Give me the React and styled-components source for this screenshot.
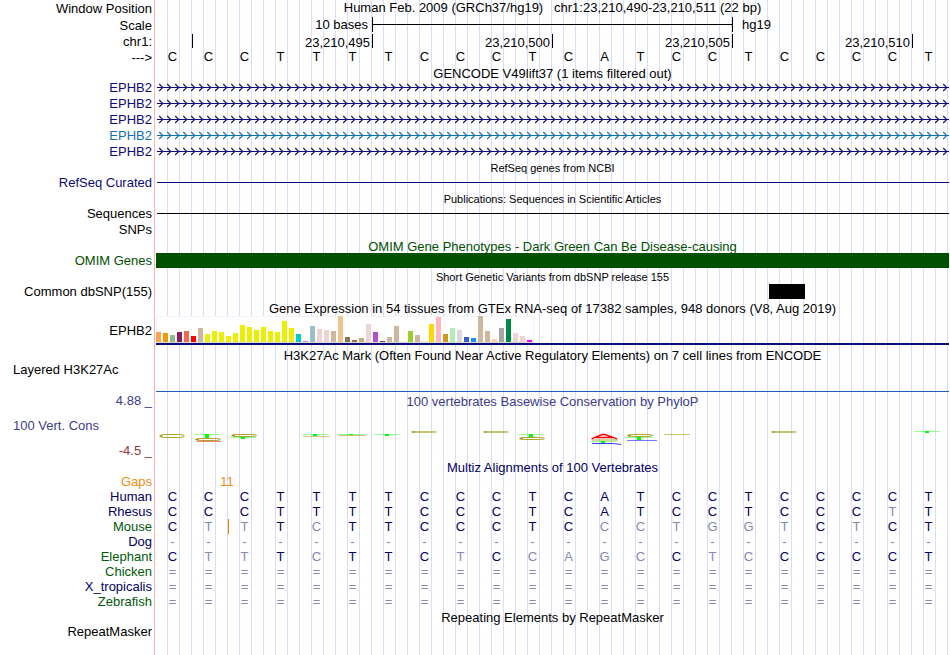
import React from "react";
import styled, { createGlobalStyle } from "styled-components";

const navy = "#0c0c78";

const bases = "CCCTTTTCCCTCATCCTCCCCT";

const positions = [
  { start: 1, end: 2, text: "" },
  { start: 2, end: 7, text: "23,210,495" },
  { start: 7, end: 12, text: "23,210,500" },
  { start: 12, end: 17, text: "23,210,505" },
  { start: 17, end: 22, text: "23,210,510" },
];

const transcripts = [navy, navy, navy, "#1470b0", navy];

// [height, colour] for each tissue
const tissues = [
  [10, "#ffa54f"], [9, "#ee9a00"], [7, "#8fbc8f"], [10, "#8b1c62"],
  [11, "#ee6a50"], [6, "#ff0000"], [14, "#cdb79e"], [8, "#eeee00"],
  [11, "#eeee00"], [10, "#eeee00"], [6, "#eeee00"], [9, "#eeee00"],
  [17, "#eeee00"], [15, "#eeee00"], [12, "#eeee00"], [15, "#eeee00"],
  [11, "#eeee00"], [10, "#eeee00"], [21, "#eeee00"], [14, "#eeee00"],
  [8, "#00cdcd"], [1, "#ee82ee"], [16, "#9ac0cd"], [13, "#eed5d2"],
  [12, "#eed5d2"], [11, "#cdb79e"], [26, "#eec591"], [5, "#8b7355"],
  [2, "#8b7355"], [4, "#cdaa7d"], [18, "#eed5d2"], [10, "#b452cd"],
  [1, "#7a378b"], [5, "#cdb79e"], [16, "#cdb79e"], [0, "#cdb79e"],
  [11, "#9acd32"], [7, "#cdb79e"], [0, "#7a67ee"], [18, "#ffd700"],
  [25, "#ffb6c1"], [8, "#cd9b1d"], [14, "#b4eeb4"], [12, "#d9d9d9"],
  [5, "#3a5fcd"], [4, "#1e90ff"], [26, "#cdb79e"], [11, "#cdb79e"],
  [3, "#ffd39b"], [14, "#a6a6a6"], [23, "#008b45"], [9, "#eed5d2"],
  [6, "#eed5d2"], [2, "#ff00ff"],
];

// lower case marks a base that differs from human
const species = [
  { name: "Human", color: "#000064", row: bases },
  { name: "Rhesus", color: "#000064", row: "CCCTTTTCCCTCATCCTCCCtT" },
  { name: "Mouse", color: "#005a0a", row: "CttTcTTCCCTCcctggtCtCT", insert: 2 },
  { name: "Dog", color: "#000064", row: "-".repeat(22) },
  { name: "Elephant", color: "#005a0a", row: "CttTcTTCtCcagcCtcCCCCT" },
  { name: "Chicken", color: "#005a0a", row: "=".repeat(22) },
  { name: "X_tropicalis", color: "#000064", row: "=".repeat(22) },
  { name: "Zebrafish", color: "#005a0a", row: "=".repeat(22) },
];

const Intron = ({ color, id }) => (
  <Strand aria-hidden="true">
    <defs>
      <pattern id={id} width="8" height="16" patternUnits="userSpaceOnUse">
        <path d="M3.2 4 L6.7 7.5 L3.2 11" fill="none" stroke={color} strokeWidth="1.1" />
      </pattern>
    </defs>
    <rect x="0" y="0" width="100%" height="16" fill={`url(#${id})`} />
    <rect x="1" y="7" width="100%" height="1" fill={color} />
  </Strand>
);

const Oval = ({ x, y, h = 3 }) => (
  <g fill="none" stroke="#a09c10">
    <rect
      x={x + 0.5}
      y={y + 0.5}
      width="25"
      height={h - 1}
      rx="6"
      ry={(h - 1) / 2}
      strokeWidth={h > 2 ? 0.9 : 0.6}
    />
    <path d={`M${x + 1} ${y + h / 2} h3`} strokeWidth="1.2" />
  </g>
);

const Stem = ({ x, y, h }) => (
  <g fill="#00ff00">
    <rect x={x} y={y} width="26" height="1" opacity="0.4" />
    <rect x={x + 11} y={y} width="4" height={h} />
  </g>
);

// one unit is one pixel, 36 units to a base
const Conservation = () => (
  <Plot viewBox="0 0 793 50" aria-label="PhyloP scores">
    <Oval x={3} y={25} h={4} />
    <Stem x={38} y={25} h={4} />
    <Oval x={39} y={29} />
    <rect x="41" y="32" width="24" height="1" fill="#ff0000" opacity="0.5" />
    <Oval x={75} y={25} />
    <Stem x={74} y={28} h={2} />
    <Stem x={146} y={25} h={2} />
    <rect x="147" y="27" width="27" height="1" fill="#a09c10" opacity="0.5" />
    <Stem x={182} y={25} h={1} />
    <rect x="183" y="26" width="27" height="1" fill="#a09c10" opacity="0.6" />
    <Stem x={218} y={25} h={2} />
    <Oval x={255} y={22} h={2} />
    <Oval x={327} y={22} h={2} />
    <Stem x={362} y={25} h={3} />
    <Oval x={363} y={28} />
    <rect x="436" y="30" width="26" height="2" fill="#a09c10" opacity="0.4" />
    <path
      d="M435.5 29.8 L446 25.5 H449 L461 29.8 M440 28.5 H457"
      fill="none"
      stroke="#ff0000"
      strokeWidth="1.4"
    />
    <Stem x={434} y={32} h={2} />
    <path d="M436 34.5 H457 L465 35.5" fill="none" stroke="#3c3cff" />
    <Oval x={471} y={25} />
    <Stem x={470} y={28} h={3} />
    <rect x="471" y="31" width="30" height="1" fill="#3c3cff" opacity="0.7" />
    <rect x="508" y="25" width="26" height="1" fill="#a09c10" opacity="0.6" />
    <Oval x={615} y={22} h={2} />
    <Stem x={758} y={22} h={2} />
  </Plot>
);

const App = () => {
  return (
    <>
      <GlobalStyle />
      <Browser>
        <Row $height={17}>
          <Label>Window Position</Label>
          <Heading>
            {"Human Feb. 2009 (GRCh37/hg19)   chr1:23,210,490-23,210,511 (22 bp)"}
          </Heading>
        </Row>
        <Row $height={17}>
          <Label>Scale</Label>
          <BaseGrid>
            <ScaleText>10 bases</ScaleText>
            <ScaleBar />
            <Assembly>hg19</Assembly>
          </BaseGrid>
        </Row>
        <Row $height={16}>
          <Label>chr1:</Label>
          <BaseGrid>
            {positions.map((p) => (
              <Position key={p.start} $start={p.start} $end={p.end}>
                {p.text}
              </Position>
            ))}
          </BaseGrid>
        </Row>
        <Row $height={15}>
          <Label>---&gt;</Label>
          <BaseGrid>
            {bases.split("").map((b, i) => (
              <Base key={i}>{b}</Base>
            ))}
          </BaseGrid>
        </Row>

        <section>
          <Title>GENCODE V49lift37 (1 items filtered out)</Title>
          {transcripts.map((color, i) => (
            <Row key={i}>
              <Label $color={color}>EPHB2</Label>
              <Intron color={color} id={`intron${i}`} />
            </Row>
          ))}
        </section>

        <section>
          <Title $small>RefSeq genes from NCBI</Title>
          <Row>
            <Label $color={navy}>RefSeq Curated</Label>
            <Line $color={navy} />
          </Row>
        </section>

        <section>
          <Title $small>Publications: Sequences in Scientific Articles</Title>
          <Row>
            <Label>Sequences</Label>
            <Line $color="#000" />
          </Row>
          <Row>
            <Label>SNPs</Label>
          </Row>
        </section>

        <section>
          <Title $color="#005000">
            OMIM Gene Phenotypes - Dark Green Can Be Disease-causing
          </Title>
          <Row>
            <Label $color="#005000">OMIM Genes</Label>
            <Block $color="#005000" />
          </Row>
        </section>

        <section>
          <Title $small>Short Genetic Variants from dbSNP release 155</Title>
          <Row>
            <Label>Common dbSNP(155)</Label>
            <BaseGrid>
              <Snp />
            </BaseGrid>
          </Row>
        </section>

        <section>
          <Title>
            Gene Expression in 54 tissues from GTEx RNA-seq of 17382 samples, 948 donors (V8, Aug 2019)
          </Title>
          <Row $height={32}>
            <Label>EPHB2</Label>
            <Expression>
              <Bars>
                {tissues.map(([height, color], i) => (
                  <Bar key={i} style={{ height, background: color }} />
                ))}
              </Bars>
            </Expression>
          </Row>
        </section>

        <section>
          <Title>
            H3K27Ac Mark (Often Found Near Active Regulatory Elements) on 7 cell lines from ENCODE
          </Title>
          <Row $height={31}>
            <Label $left>Layered H3K27Ac</Label>
            <Signal />
          </Row>
        </section>

        <Row as="section" $height={66}>
          <Axis>
            <Label $color="#3c3c8c">4.88 _</Label>
            <Label $left $color="#3c3c8c">100 Vert. Cons</Label>
            <Label $color="#8c3c3c">-4.5 _</Label>
          </Axis>
          <div>
            <TrackHeading>100 vertebrates Basewise Conservation by PhyloP</TrackHeading>
            <Conservation />
          </div>
        </Row>

        <section>
          <Title $color="#000064">Multiz Alignments of 100 Vertebrates</Title>
          <Alignment>
            <colgroup>
              <NameCol />
              <BaseCol span="22" />
            </colgroup>
            <tbody>
              <tr>
                <Name scope="row" $color="#f08c14">Gaps</Name>
                <td />
                <Gap colSpan="2">11</Gap>
              </tr>
              {species.map((s) => (
                <tr key={s.name}>
                  <Name scope="row" $color={s.color}>{s.name}</Name>
                  {s.row.split("").map((b, i) => (
                    <Cell key={i} $faded={b < "A" || b > "Z"} $insert={s.insert === i}>
                      {b.toUpperCase()}
                    </Cell>
                  ))}
                </tr>
              ))}
            </tbody>
          </Alignment>
        </section>

        <section>
          <Title>Repeating Elements by RepeatMasker</Title>
          <Row>
            <Label>RepeatMasker</Label>
          </Row>
        </section>
      </Browser>
    </>
  );
};

const GlobalStyle = createGlobalStyle`
  body {
    margin: 0;
    background: white;
  }
`;

const Browser = styled.main`
  box-sizing: border-box;
  min-height: 100vh;
  padding-right: 1px;
  overflow: hidden;
  font-family: "Liberation Sans", Arial, sans-serif;
  font-size: 13px;
  line-height: 16px;
  color: black;
  background:
    linear-gradient(
      to right,
      white 154px,
      #ffb4b4 154px 155px,
      white 155px 167px,
      transparent 167px
    ),
    linear-gradient(to right, #dcdcf8 1px, transparent 1px) 167px 0 / 12px 100%;
`;

const Row = styled.div`
  display: grid;
  grid-template-columns: 152px minmax(0, 1fr);
  column-gap: 4px;
  height: ${(p) => p.$height || 16}px;
`;

const Label = styled.div`
  align-self: ${(p) => (p.$left ? "start" : "center")};
  padding-left: 13px;
  text-align: ${(p) => (p.$left ? "left" : "right")};
  color: ${(p) => p.$color || "black"};
  white-space: nowrap;
`;

const Heading = styled.h1`
  margin: 0;
  font-size: 13px;
  font-weight: 400;
  text-align: center;
  white-space: pre;
`;

const TrackHeading = styled.h2`
  height: 16px;
  margin: 0;
  font-size: 13px;
  font-weight: 400;
  line-height: 18px;
  text-align: center;
  color: #3c3c8c;
`;

const Title = styled.h2`
  height: 15px;
  margin: 0;
  padding-left: 156px;
  font-size: ${(p) => (p.$small ? 11 : 13)}px;
  font-weight: 400;
  line-height: ${(p) => (p.$small ? 16 : 18)}px;
  text-align: center;
  white-space: nowrap;
  color: ${(p) => p.$color || "black"};
`;

const BaseGrid = styled.div`
  display: grid;
  grid-template-columns: repeat(22, 36px);
`;

const ScaleText = styled.span`
  grid-column: 1 / 7;
  padding-right: 4px;
  text-align: right;
`;

const ScaleBar = styled.div`
  grid-column: 7 / 17;
  height: 15px;
  margin-right: -1px;
  border: solid black;
  border-width: 0 1px;
  box-sizing: border-box;
  background: linear-gradient(black, black) 0 7px / 100% 1px no-repeat;
`;

const Assembly = styled.span`
  grid-column: 17 / -1;
  padding-left: 10px;
`;

const Position = styled.span`
  grid-column: ${(p) => p.$start} / ${(p) => p.$end};
  height: 14px;
  margin-right: -1px;
  padding-right: 2px;
  border-right: 1px solid black;
  line-height: 18px;
  text-align: right;
`;

const Base = styled.span`
  padding-right: 3px;
  line-height: 14px;
  text-align: center;
`;

const Strand = styled.svg`
  display: block;
  width: 100%;
  height: 16px;
`;

const Line = styled.div`
  height: 1px;
  margin: 7px 0 0 1px;
  background: ${(p) => p.$color};
`;

const Block = styled.div`
  height: 15px;
  background: ${(p) => p.$color};
`;

const Snp = styled(Block)`
  grid-column: 18;
  margin: 0 -1px 0 1px;
  background: black;
`;

const Expression = styled.div`
  height: 29px;
  margin-top: 1px;
  border-bottom: 2px solid ${navy};
  box-sizing: border-box;
`;

const Bars = styled.div`
  display: flex;
  align-items: flex-end;
  gap: 2px;
  width: 378px;
  height: 27px;
  box-sizing: border-box;
  border-bottom: 1px solid #d8d8d8;
  background: white;
  box-shadow: inset 0 0 0 1px #f4f4f4;
`;

const Bar = styled.div`
  flex: 0 0 5px;
`;

const Signal = styled.div`
  height: 29px;
  border-bottom: 1px solid #2060b4;
`;

const Axis = styled.div`
  display: flex;
  flex-direction: column;
  justify-content: space-between;

  ${Label} {
    align-self: stretch;
  }
`;

const Plot = styled.svg`
  display: block;
  width: 793px;
  height: 50px;
`;

const Alignment = styled.table`
  table-layout: fixed;
  width: 948px;
  border-collapse: collapse;
  line-height: 15px;

  td,
  th {
    height: 15px;
    padding: 0;
    box-sizing: border-box;
  }
`;

const NameCol = styled.col`
  width: 156px;
`;

const BaseCol = styled.col`
  width: 36px;
`;

const Name = styled.th`
  && {
    padding-right: 4px;
  }
  font-weight: 400;
  text-align: right;
  color: ${(p) => p.$color};
`;

const Cell = styled.td`
  && {
    padding-right: 3px;
  }
  text-align: center;
  color: ${(p) => (p.$faded ? "#8888b4" : "#000064")};
  box-shadow: ${(p) => (p.$insert ? "inset 1px 0 #e08200" : "none")};
`;

const Gap = styled.td`
  && {
    padding-right: 2px;
  }
  text-align: center;
  color: #f08c14;
`;

export default App;
